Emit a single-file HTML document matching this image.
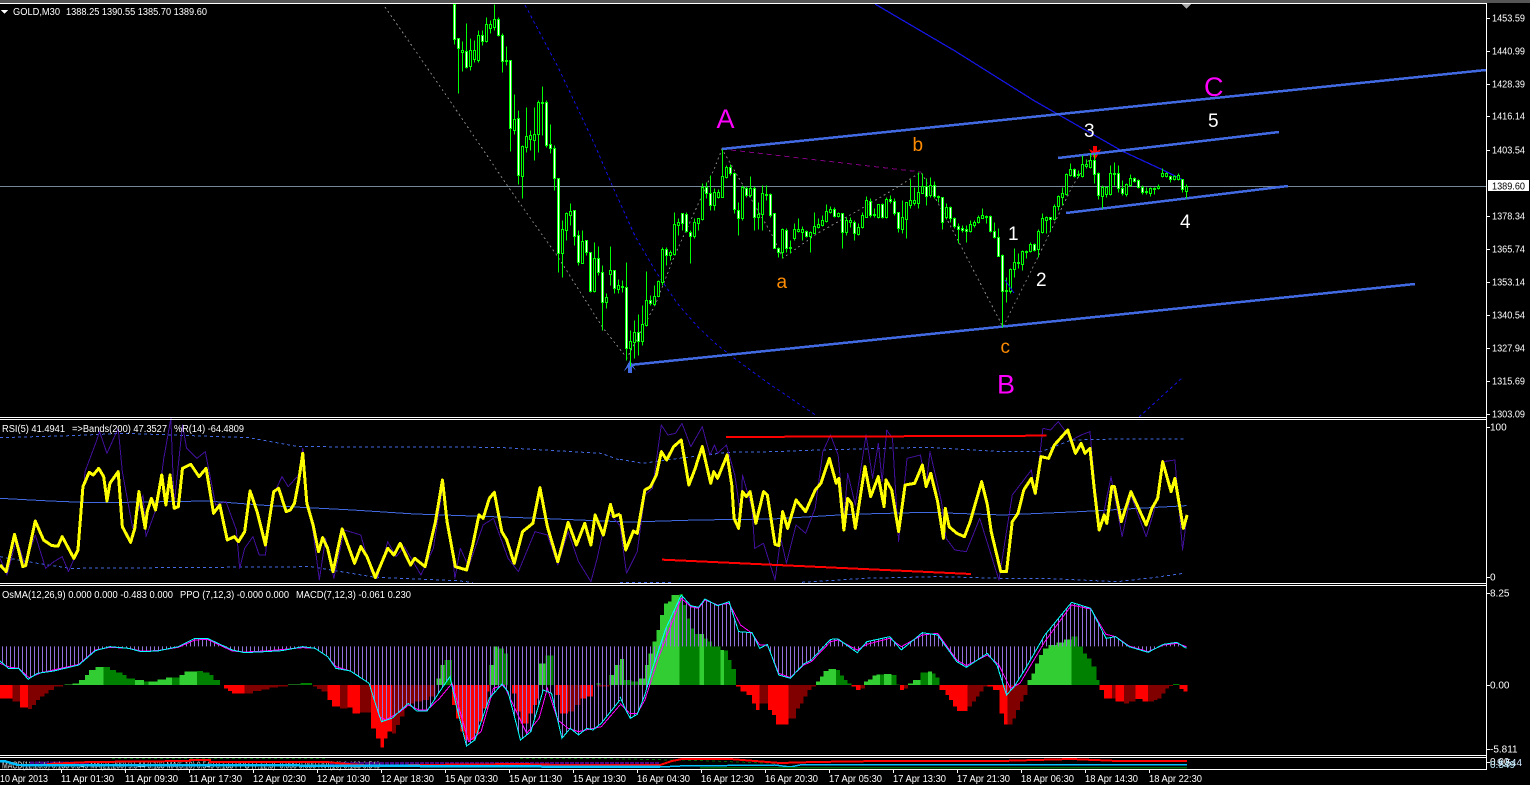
<!DOCTYPE html>
<html lang="en">
<head>
<meta charset="utf-8">
<title>GOLD,M30</title>
<style>
html,body{margin:0;padding:0;background:#000;overflow:hidden;width:1530px;height:785px}
svg{display:block}
text{font-family:"Liberation Sans",sans-serif;font-size:10px;fill:#fff}
.z{fill:none;vector-effect:non-scaling-stroke}
.big{font-size:27px}
.mid{font-size:19px}
.o{fill:#ff8c00}
.m{fill:#ff00ff}
</style>
</head>
<body>
<svg xmlns="http://www.w3.org/2000/svg" width="1530" height="785" viewBox="0 0 1530 785" shape-rendering="crispEdges">
<defs>
<pattern id="st" width="4" height="4" patternUnits="userSpaceOnUse"><rect x="2" y="0" width="1" height="4" fill="#9370db"/></pattern>
<clipPath id="cp">
<polygon transform="translate(0,585) scale(.4147,.3333)" points="0,184 0,228 20,250 45,250 68,283 90,265 130,258 190,240 230,197 265,185 310,190 340,200 380,198 430,185 470,160 500,160 560,195 590,203 640,200 680,197 730,185 760,190 790,215 810,250 845,258 890,295 905,355 920,410 945,400 985,355 1005,378 1030,378 1060,320 1085,275 1100,360 1125,483 1145,465 1180,340 1210,298 1225,320 1255,465 1280,440 1310,315 1330,325 1355,460 1375,430 1395,450 1415,430 1430,435 1450,415 1495,345 1495,184"/>
<polygon transform="translate(620,585) scale(.3827,.3333)" points="0,184 0,335 15,375 27,400 45,388 65,330 85,250 120,130 160,30 185,62 205,67 222,42 255,62 285,50 310,140 345,143 365,190 385,178 415,270 445,280 480,237 500,225 550,163 570,162 620,203 645,170 705,155 735,195 790,143 830,150 880,230 905,247 960,205 985,240 1010,330 1030,305 1060,250 1110,150 1180,52 1230,70 1270,160 1295,155 1330,185 1380,202 1420,178 1455,172 1480,190 1480,184"/>
</clipPath>
</defs>

<rect width="1530" height="785" fill="#000"/>
<rect width="1530" height="3" fill="#555"/>

<!-- Main chart drawing objects (behind candles) -->
<line x1="0" y1="186.5" x2="1486" y2="186.5" stroke="#778899"/>
<polyline fill="none" stroke="#808080" stroke-dasharray="2 3" points="385,7 446,95 509,188 558,257 603,328 627,358 656,303 674,257 700,200 715,167 722,149 740,180 771,233 783,258 818,233 859,210 896,188 921,172 950,225 1003,327 1038,257 1072,187 1092,155"/>
<polyline fill="none" stroke="#1010e0" stroke-dasharray="3 3" points="525,5 558,67 594,143 612,185 635,236 656,272 677,303 698,327 716,344 734,358 768,383 817,416"/>
<polyline fill="none" stroke="#1010e0" stroke-dasharray="3 3" points="1139,417 1160,398 1183,377"/>
<polyline fill="none" stroke="#1515e0" stroke-width="1.3" points="875,4 955,51 1033,100 1122,151 1163,170 1183,180"/>
<polyline fill="none" stroke="#800080" stroke-dasharray="5 4" points="722,149 921,172"/>
<polygon points="630,360 636,371 632,367 632,373 628,373 628,367 624,371" fill="#4169e1"/>
<polygon points="1093,146 1097,146 1097,151 1101,149 1095,160 1089,149 1093,151" fill="#f00"/>

<!-- Trend lines -->
<g stroke="#4169e1" stroke-width="2.5" fill="none">
<line x1="630" y1="365" x2="1415" y2="284"/>
<line x1="722" y1="149" x2="1486" y2="70"/>
<line x1="1058" y1="158" x2="1279" y2="132"/>
<line x1="1066" y1="213" x2="1288" y2="186"/>
</g>

<!-- Candles -->
<g transform="translate(.5,.5)">
<path fill="none" stroke="#00ff00" d="M454 4V44M458 38V93M462 41V71M466 23V68M470 38V70M474 40V62M478 30V62M482 30V45M486 17V42M490 20V33M494 4V30M498 17V36M502 33V72M506 46V65M510 60V151M514 94V134M518 110V184M522 145V198M526 107V152M530 130V150M534 107V160M538 100V152M542 86V135M546 100V147M550 124V153M554 145V190M558 178V272M562 220V277M566 212V240M570 203V225M574 210V245M578 230V265M582 230V263M586 240V255M590 252V292M594 242V292M598 246V275M602 265V330M606 293V308M610 246V285M614 270V293M618 279V293M622 280V292M626 262V360M630 330V366M634 320V358M638 314V355M642 305V345M646 271V326M650 295V305M654 285V305M658 280V296M662 247V285M666 247V265M670 250V260M674 212V255M678 218V235M682 213V230M686 212V232M690 230V263M694 218V238M698 218V230M702 183V220M706 182V198M710 175V210M714 188V210M718 189V198M722 149V197M726 165V178M730 164V175M734 172V213M738 202V235M742 185V220M746 186V197M750 176V197M754 186V230M758 202V229M762 185V230M766 185V200M770 193V217M774 213V248M778 247V257M782 228V258M786 228V252M790 240V253M794 223V240M798 218V232M802 226V240M806 230V237M810 231V252M814 212V233M818 218V228M822 215V226M826 204V222M830 206V213M834 207V217M838 212V217M842 213V248M846 217V235M850 217V227M854 220V240M858 223V235M862 212V228M866 196V217M870 198V217M874 208V217M878 204V218M882 203V218M886 197V218M890 195V203M894 198V215M898 212V232M902 200V233M906 202V238M910 179V208M914 187V205M918 172V208M922 173V193M926 178V205M930 177V197M934 181V198M938 195V202M942 197V229M946 203V219M950 206V222M954 217V228M958 223V243M962 225V232M966 225V242M970 220V232M974 220V227M978 215V223M982 208V218M986 215V223M990 215V232M994 222V238M998 228V256M1002 254V327M1006 277V302M1010 268V293M1014 248V277M1018 253V268M1022 250V270M1026 250V258M1030 242V252M1034 243V251M1038 229V257M1042 213V233M1046 216V233M1050 217V231M1054 204V220M1058 195V210M1062 187V205M1066 173V195M1070 163V176M1074 168V177M1078 170V177M1082 155V177M1086 159V168M1090 153V168M1094 153V183M1098 172V199M1102 185V208M1106 186V197M1110 165V195M1114 162V185M1118 165V192M1122 180V195M1126 183V196M1130 174V186M1134 177V182M1138 179V188M1142 185V194M1146 187V194M1150 187V196M1154 187V194M1158 184V189M1162 168V177M1166 172V177M1170 175V182M1174 175V180M1178 173V180M1182 179V192M1186 184V198"/>
<path fill="#fff" stroke="#00ff00" d="M453 4h2V39h-2zM457 38h2V48h-2zM465 51h2V67h-2zM481 35h2V41h-2zM497 19h2V35h-2zM501 35h2V61h-2zM509 60h2V128h-2zM517 118h2V175h-2zM545 102h2V145h-2zM549 144h2V148h-2zM553 148h2V178h-2zM557 178h2V253h-2zM573 210h2V236h-2zM577 235h2V262h-2zM585 240h2V252h-2zM589 252h2V291h-2zM597 258h2V272h-2zM601 272h2V302h-2zM613 270h2V288h-2zM621 286h2V287h-2zM625 287h2V348h-2zM637 332h2V341h-2zM649 300h2V303h-2zM665 249h2V255h-2zM681 213h2V223h-2zM685 214h2V231h-2zM689 232h2V236h-2zM705 187h2V193h-2zM709 193h2V205h-2zM729 167h2V173h-2zM733 173h2V209h-2zM737 210h2V218h-2zM745 188h2V195h-2zM753 188h2V217h-2zM769 194h2V215h-2zM773 213h2V248h-2zM777 248h2V252h-2zM785 230h2V248h-2zM805 231h2V236h-2zM833 209h2V216h-2zM841 213h2V232h-2zM853 222h2V233h-2zM869 201h2V215h-2zM881 204h2V217h-2zM889 199h2V201h-2zM893 201h2V213h-2zM897 212h2V228h-2zM925 186h2V196h-2zM933 185h2V196h-2zM937 196h2V197h-2zM941 197h2V222h-2zM949 207h2V218h-2zM953 218h2V226h-2zM957 226h2V229h-2zM961 228h2V230h-2zM965 229h2V231h-2zM989 216h2V231h-2zM993 231h2V237h-2zM997 237h2V256h-2zM1001 255h2V291h-2zM1005 290h2V291h-2zM1033 244h2V250h-2zM1049 217h2V219h-2zM1073 169h2V176h-2zM1093 160h2V174h-2zM1097 173h2V195h-2zM1117 173h2V188h-2zM1121 188h2V193h-2zM1133 178h2V181h-2zM1137 180h2V187h-2zM1141 187h2V192h-2zM1169 176h2V179h-2zM1181 179h2V189h-2z"/>
<path fill="#000" stroke="#00ff00" d="M461 50h2V52h-2zM469 50h2V66h-2zM473 50h2V59h-2zM477 35h2V60h-2zM485 24h2V41h-2zM489 24h2V28h-2zM493 19h2V27h-2zM505 60h2V61h-2zM513 119h2V130h-2zM521 146h2V176h-2zM525 136h2V147h-2zM529 135h2V139h-2zM533 134h2V140h-2zM537 102h2V134h-2zM541 102h2V103h-2zM561 229h2V253h-2zM565 213h2V230h-2zM569 211h2V215h-2zM581 241h2V263h-2zM593 258h2V291h-2zM605 297h2V302h-2zM609 270h2V274h-2zM617 285h2V289h-2zM629 341h2V348h-2zM633 332h2V342h-2zM641 324h2V341h-2zM645 300h2V325h-2zM653 296h2V304h-2zM657 281h2V296h-2zM661 249h2V282h-2zM669 252h2V255h-2zM673 224h2V254h-2zM677 222h2V225h-2zM693 222h2V236h-2zM697 218h2V223h-2zM701 187h2V219h-2zM713 192h2V205h-2zM717 192h2V197h-2zM721 176h2V197h-2zM725 167h2V177h-2zM741 187h2V218h-2zM749 188h2V195h-2zM757 214h2V217h-2zM761 193h2V214h-2zM765 194h2V195h-2zM781 229h2V252h-2zM789 247h2V248h-2zM793 229h2V238h-2zM797 229h2V231h-2zM801 229h2V232h-2zM809 232h2V236h-2zM813 226h2V233h-2zM817 224h2V227h-2zM821 220h2V225h-2zM825 211h2V221h-2zM829 209h2V212h-2zM837 213h2V216h-2zM845 220h2V232h-2zM849 220h2V222h-2zM857 227h2V234h-2zM861 215h2V227h-2zM865 200h2V217h-2zM873 214h2V215h-2zM877 204h2V217h-2zM885 199h2V217h-2zM901 217h2V229h-2zM905 202h2V219h-2zM909 200h2V205h-2zM913 200h2V203h-2zM917 192h2V203h-2zM921 186h2V193h-2zM929 185h2V195h-2zM945 207h2V217h-2zM969 224h2V231h-2zM973 222h2V225h-2zM977 217h2V222h-2zM981 215h2V218h-2zM985 216h2V217h-2zM1009 269h2V291h-2zM1013 262h2V269h-2zM1017 262h2V263h-2zM1021 251h2V264h-2zM1025 251h2V252h-2zM1029 244h2V251h-2zM1037 231h2V249h-2zM1041 218h2V232h-2zM1045 217h2V220h-2zM1053 206h2V219h-2zM1057 196h2V206h-2zM1061 193h2V197h-2zM1065 174h2V194h-2zM1069 169h2V175h-2zM1077 174h2V175h-2zM1081 164h2V176h-2zM1085 164h2V166h-2zM1089 160h2V167h-2zM1101 187h2V196h-2zM1105 187h2V194h-2zM1109 173h2V194h-2zM1113 173h2V174h-2zM1125 184h2V194h-2zM1129 178h2V185h-2zM1145 191h2V192h-2zM1149 188h2V193h-2zM1153 188h2V189h-2zM1157 186h2V188h-2zM1161 173h2V176h-2zM1165 173h2V176h-2zM1173 176h2V179h-2zM1177 175h2V179h-2zM1185 186h2V191h-2z"/>
</g>

<line x1="1005" y1="280" x2="1014" y2="293" stroke="#1010e0"/>
<polygon points="1181,3 1192,3 1186.5,9" fill="#aaa"/>

<!-- Wave labels -->
<g shape-rendering="auto">
<text class="big m" x="716.5" y="128">A</text>
<text class="big m" x="997" y="393.5">B</text>
<text class="big m" x="1204" y="96">C</text>
<text class="mid o" x="776.5" y="288">a</text>
<text class="mid o" x="912.5" y="151">b</text>
<text class="mid o" x="1000.5" y="353">c</text>
<text class="mid" x="1008" y="240">1</text>
<text class="mid" x="1036" y="286">2</text>
<text class="mid" x="1084" y="137">3</text>
<text class="mid" x="1180" y="228">4</text>
<text class="mid" x="1208" y="127">5</text>
</g>

<!-- RSI panel -->
<g stroke-linejoin="round">
<g transform="translate(0,415) scale(.4147,.3333)">
<polyline class="z" stroke="#4169e1" stroke-dasharray="3 3" stroke-width="1" points="0,68 170,62 300,55 600,68 720,95 1200,97 1450,115 1494,135"/>
<polyline class="z" stroke="#4169e1" stroke-dasharray="3 3" stroke-width="1" points="0,425 90,445 170,460 750,455 905,487 1100,497 1140,502"/>
<polyline class="z" stroke="#4169e1" stroke-width="1" points="0,250 120,258 200,262 300,262 500,258 650,272 850,285 1000,297 1300,310 1494,320"/>
<polyline class="z" stroke="#40109a" stroke-width="1" points="0,430 17,480 40,370 60,450 85,360 110,460 130,440 150,425 165,470 190,400 205,170 232,80 240,50 258,115 285,40 295,170 320,340 345,240 352,365 380,270 395,130 412,10 420,270 440,30 450,100 475,130 495,110 520,270 545,260 570,345 578,460 590,400 610,365 625,420 640,420 655,250 680,185 695,215 720,180 730,100 740,250 755,350 770,495 785,370 805,490 830,345 870,360 895,470 910,490 935,380 955,425 975,395 1015,480 1045,400 1067,220 1085,350 1097,490 1110,400 1130,455 1165,330 1190,310 1225,430 1250,470 1290,350 1320,360 1345,450 1370,350 1395,440 1425,500 1440,430 1465,290 1494,330"/>
<polyline class="z" stroke="#ffff00" stroke-width="3" points="0,450 15,470 35,358 55,455 62,452 85,318 105,375 125,392 140,393 150,365 178,430 188,405 200,215 215,172 225,180 238,160 250,185 258,258 265,205 285,170 295,335 315,382 325,340 335,230 350,340 355,290 365,250 375,285 390,180 400,270 410,180 420,280 430,275 440,160 460,148 480,185 497,160 515,295 530,270 548,375 565,365 575,380 590,350 603,228 620,290 640,390 660,230 672,220 690,290 700,285 710,265 720,200 730,115 740,265 755,330 768,410 778,368 790,400 803,470 825,342 855,445 870,395 885,425 905,488 935,400 950,420 965,385 990,450 1000,430 1025,455 1050,320 1067,195 1078,320 1098,455 1125,465 1140,390 1155,300 1165,310 1180,250 1192,232 1210,350 1222,375 1240,445 1260,350 1285,325 1302,218 1320,335 1345,440 1370,322 1390,390 1410,325 1425,390 1435,300 1455,360 1472,268 1480,305 1495,297"/>
</g>
<g transform="translate(620,415) scale(.3827,.3333)">
<polyline class="z" stroke="#4169e1" stroke-dasharray="3 3" stroke-width="1" points="0,133 60,145 120,135 280,112 400,110 520,105 800,97 1000,110 1100,110 1180,75 1300,72 1472,72"/>
<polyline class="z" stroke="#4169e1" stroke-dasharray="3 3" stroke-width="1" points="0,503 140,503"/>
<polyline class="z" stroke="#4169e1" stroke-dasharray="3 3" stroke-width="1" points="475,502 640,490 830,485 1000,490 1100,490 1300,500 1400,487 1472,475"/>
<polyline class="z" stroke="#4169e1" stroke-width="1" points="0,322 200,315 400,312 600,298 800,292 1000,300 1200,290 1480,272"/>
<polyline class="z" stroke="#40109a" stroke-width="1" points="0,330 17,475 45,410 65,240 85,220 108,30 125,60 145,55 162,25 185,95 215,35 235,120 247,90 255,115 278,90 300,180 315,300 320,180 345,280 352,400 375,385 405,495 420,370 435,445 460,330 485,355 510,280 530,110 550,60 570,120 585,310 595,175 615,270 643,60 660,190 675,85 685,200 697,45 712,70 728,380 750,130 785,120 800,210 810,110 840,260 852,370 875,405 905,410 940,310 990,495 1025,240 1045,210 1075,165 1085,240 1105,40 1125,45 1145,20 1165,50 1180,75 1205,60 1228,50 1240,200 1255,345 1283,185 1300,290 1312,365 1335,240 1375,365 1395,290 1420,140 1450,135 1470,405 1482,300"/>
<polyline class="z" stroke="#ffff00" stroke-width="3" points="0,297 15,405 35,348 45,355 65,225 80,215 95,180 108,110 122,135 140,95 160,75 180,210 195,165 215,95 237,205 245,170 255,190 280,120 292,210 298,310 310,340 320,230 330,245 340,230 355,325 375,230 385,240 405,388 415,392 425,290 438,340 460,255 485,290 510,225 525,205 547,130 565,205 572,190 585,345 595,250 605,265 615,340 640,155 655,245 675,185 690,275 695,195 710,225 728,350 745,210 770,205 790,150 800,215 812,175 830,260 845,370 850,280 860,335 880,355 900,365 915,320 945,200 960,270 970,350 995,470 1010,470 1025,320 1040,295 1055,225 1075,190 1085,235 1100,125 1120,130 1135,90 1170,45 1190,115 1205,85 1215,115 1228,100 1240,230 1252,345 1265,300 1272,325 1285,215 1292,215 1310,320 1335,230 1375,330 1390,280 1405,250 1418,140 1440,230 1450,190 1472,340 1482,300"/>
<polyline class="z" stroke="#ff0000" stroke-width="2" points="277,66 1115,62"/>
<polyline class="z" stroke="#ff0000" stroke-width="2" points="110,434 917,477"/>
</g>
</g>

<!-- MACD panel histogram -->
<g transform="translate(0,585) scale(.4147,.3333)">
<path fill="#ff0000" d="M0 300V340H30V300zM48 300V368H67V300zM540 300V310H550V318H560V326H590V300zM790 300V345H800V365H820V300zM838 300V368H850V385H868V300zM895 300V430H907V460H917V488H926V460H935V440H945V300zM1090 300V360H1100V400H1110V440H1120V465H1145V445H1155V410H1165V370H1175V320H1180V300zM1235 300V325H1245V380H1255V415H1275V385H1285V360H1295V340H1300V300zM1340 300V330H1350V385H1370V300zM1400 300V340H1415V335H1430V300z"/>
<path fill="#800000" d="M30 300V350H48V300zM67 300V372H77V360H87V345H97V335H107V325H117V315H130V305H152V300zM590 300V325H610V318H630V314H650V308H670V304H695V300zM755 300V305H765V312H775V320H790V300zM820 300V370H838V300zM868 300V382H895V300zM945 300V445H955V420H965V395H975V370H980V355H1000V350H1020V345H1035V335H1050V300zM1370 300V380H1385V360H1400V300zM1440 300V305H1470V300z"/>
<path fill="#32cd32" d="M155 300V298H175V295H190V285H205V270H215V255H230V246H250V300zM325 300V285H347V300zM358 300V290H380V283H400V277H415V300zM433 300V270H445V260H475V300zM695 300V298H725V300zM1052 300V280H1062V240H1072V300zM1180 300V240H1190V185H1200V300zM1300 300V235H1315V300zM1470 300V270H1480V240H1494V300z"/>
<path fill="#008000" d="M250 300V246H265V255H280V262H295V270H305V280H325V300zM347 300V290H358V300zM415 300V277H433V300zM475 300V258H490V262H505V270H515V285H530V300zM725 300V294H752V300zM1072 300V225H1090V300zM1200 300V190H1215V205H1225V300zM1315 300V212H1335V300zM1438 300V294H1448V300z"/>
</g>
<g transform="translate(620,585) scale(.3827,.3333)">
<path fill="#32cd32" d="M0 300V222H10V300zM50 300V280H65V240H75V205H85V170H95V135H105V90H115V55H125V50H135V30H155V300zM208 300V147H220V300zM262 300V195H272V300zM512 300V290H522V275H532V258H545V252H565V300zM638 300V290H648V283H660V272H670V268H680V300zM690 300V267H710V300zM753 300V295H765V285H785V300zM805 300V260H815V300zM1065 300V285H1075V265H1085V235H1095V210H1105V190H1120V180H1140V172H1160V163H1180V300z"/>
<path fill="#008000" d="M10 300V285H30V290H50V300zM155 300V27H165V60H175V100H185V130H195V147H208V300zM220 300V160H230V170H240V185H262V300zM272 300V197H282V225H292V252H303V300zM565 300V255H575V272H585V285H595V295H605V300zM680 300V268H690V300zM710 300V270H722V300zM722 300V298H730V300zM785 300V263H805V300zM815 300V265H825V278H835V300zM1180 300V155H1195V185H1210V205H1220V220H1232V245H1245V285H1253V300zM1445 300V297H1462V300z"/>
<path fill="#ff0000" d="M303 300V305H315V320H330V330H345V355H355V375H365V300zM387 300V375H397V390H407V418H440V300zM605 300V305H617V315H628V300zM732 300V315H742V300zM835 300V315H850V330H860V345H870V365H880V378H908V300zM960 300V305H975V315H992V385H1003V418H1013V300zM1253 300V315H1265V340H1285V300zM1295 300V350H1317V300zM1347 300V342H1365V350H1380V300zM1462 300V312H1473V320H1483V300z"/>
<path fill="#800000" d="M365 300V355H387V300zM440 300V400H460V370H470V355H480V335H490V315H500V305H512V300zM628 300V310H640V300zM742 300V310H753V300zM908 300V365H920V350H930V335H940V320H950V305H960V300zM1013 300V418H1025V400H1035V375H1045V350H1055V330H1065V300zM1285 300V340H1295V300zM1317 300V355H1330V350H1347V300zM1380 300V350H1395V345H1405V340H1415V325H1425V310H1435V303H1445V300z"/>
</g>
<!-- MACD bars -->
<rect x="0" y="590" width="1190" height="165" fill="url(#st)" clip-path="url(#cp)"/>
<!-- MACD lines -->
<g transform="translate(0,585) scale(.4147,.3333)">
<polyline class="z" stroke="#ff00ff" points="0,235 25,247 45,250 70,278 100,263 190,238 230,195 265,187 310,190 340,198 380,197 430,187 470,165 500,163 560,198 590,201 640,198 730,188 760,190 790,215 810,245 845,258 890,295 915,395 930,405 965,380 985,360 1010,375 1030,375 1060,340 1090,295 1130,470 1160,440 1190,310 1215,300 1270,445 1300,400 1320,310 1345,405 1370,430 1395,440 1450,425 1495,360"/>
<polyline class="z" stroke="#00ffff" points="0,228 20,250 45,250 68,283 90,265 130,258 190,240 230,197 265,185 310,190 340,200 380,198 430,185 470,160 500,160 560,195 590,203 640,200 680,197 730,185 760,190 790,215 810,250 845,258 890,295 905,355 920,410 945,400 985,355 1005,378 1030,378 1060,320 1085,275 1100,360 1125,483 1145,465 1180,340 1210,298 1225,320 1255,465 1280,440 1310,315 1330,325 1355,460 1375,430 1395,450 1415,430 1430,435 1450,415 1495,345"/>
</g>
<g transform="translate(620,585) scale(.3827,.3333)">
<polyline class="z" stroke="#ff00ff" points="0,355 25,385 45,385 65,345 100,220 160,40 185,65 205,70 222,45 255,60 285,55 315,120 345,145 365,180 385,180 415,265 445,278 480,240 500,230 550,170 570,165 620,195 645,178 705,160 735,185 790,150 830,145 880,225 905,242 960,210 990,240 1020,310 1045,295 1110,170 1180,60 1230,72 1270,148 1295,155 1330,183 1380,200 1420,180 1455,175 1480,185"/>
<polyline class="z" stroke="#00ffff" points="0,335 15,375 27,400 45,388 65,330 85,250 120,130 160,30 185,62 205,67 222,42 255,62 285,50 310,140 345,143 365,190 385,178 415,270 445,280 480,237 500,225 550,163 570,162 620,203 645,170 705,155 735,195 790,143 830,150 880,230 905,247 960,205 985,240 1010,330 1030,305 1060,250 1110,150 1180,52 1230,70 1270,160 1295,155 1330,185 1380,202 1420,178 1455,172 1480,190"/>
</g>

<!-- Mini panel -->
<text x="2" y="768.5" textLength="378" lengthAdjust="spacingAndGlyphs" style="fill:#ddd" shape-rendering="auto">MACD(12,26,9) 0.133 0.549 MA(21,200) 9.544 0.133 MA(5,10) 0.549 0.133 PPO (7,12,3) -0.000 0.000 RVI(10) 0.133 0.549</text>
<g fill="none">
<polyline stroke="#006400" stroke-dasharray="3 3" points="112,758.5 325,758.5"/>
<polyline stroke="#006400" stroke-dasharray="3 3" points="520,758.5 600,758.5 700,760.5 775,763.5"/>
<polyline stroke="#4b0082" stroke-width="3" stroke-dasharray="4 1" points="30,763 90,763"/>
<polyline stroke="#4b0082" stroke-width="3" stroke-dasharray="4 1" points="330,763.5 660,763.5"/>
<polyline stroke="#ff0000" stroke-width="2" points="47,764 90,762 190,761 190,760 210,760 210,762 327,762 347,764 375,766 420,765 520,764 560,765 620,765 660,765 672,761 682,759 730,759 755,761 780,763 815,762 880,761 1000,761 1071,759 1118,761 1187,761"/>
<polyline stroke="#00bfff" stroke-width="2.5" points="0,761 4,761 18,765 300,765.5 420,766 660,767"/>
<polyline stroke="#00bfff" stroke-width="1.5" points="660,767 680,766 775,765 790,767 800,765 1187,764.5"/>
<polyline stroke="#006400" stroke-width="1.5" points="700,767.5 1187,767.5"/>
</g>

<!-- Frame lines -->
<g fill="#fff">
<rect x="0" y="3" width="1487" height="1"/>
<rect x="0" y="417" width="1487" height="1"/>
<rect x="0" y="419" width="1487" height="1"/>
<rect x="0" y="583" width="1487" height="1"/>
<rect x="0" y="585" width="1487" height="1"/>
<rect x="0" y="755" width="1487" height="1"/>
<rect x="0" y="757" width="1487" height="1"/>
<rect x="0" y="769" width="1487" height="1"/>
<rect x="1486" y="3" width="1" height="767"/>
</g>

<!-- Right axis ticks -->
<path stroke="#fff" fill="none" d="M1487 18.5h3M1487 51.5h3M1487 84.5h3M1487 116.5h3M1487 150.5h3M1487 216.5h3M1487 249.5h3M1487 282.5h3M1487 315.5h3M1487 348.5h3M1487 381.5h3M1487 414.5h3M1487 427.5h3M1487 577.5h3M1487 593.5h3M1487 685.5h3M1487 749.5h3M1487 762.5h3"/>
<!-- Bottom axis ticks -->
<path stroke="#fff" fill="none" d="M61.5 770v3M125.5 770v3M189.5 770v3M253.5 770v3M317.5 770v3M381.5 770v3M445.5 770v3M509.5 770v3M573.5 770v3M637.5 770v3M701.5 770v3M765.5 770v3M829.5 770v3M893.5 770v3M957.5 770v3M1021.5 770v3M1085.5 770v3M1149.5 770v3"/>

<!-- Text -->
<polygon points="1,10 8,10 4.5,14" fill="#fff"/>
<g shape-rendering="auto">
<text x="13" y="15" textLength="47" lengthAdjust="spacingAndGlyphs">GOLD,M30</text>
<text x="66" y="15" textLength="141" lengthAdjust="spacingAndGlyphs">1388.25 1390.55 1385.70 1389.60</text>
<text x="2" y="432" textLength="63" lengthAdjust="spacingAndGlyphs">RSI(5) 41.4941</text>
<text x="72" y="432" textLength="95" lengthAdjust="spacingAndGlyphs">=&gt;Bands(200) 47.3527</text>
<text x="174" y="432" textLength="70" lengthAdjust="spacingAndGlyphs">%R(14) -64.4809</text>
<text x="2" y="598" textLength="171" lengthAdjust="spacingAndGlyphs">OsMA(12,26,9) 0.000 0.000 -0.483 0.000</text>
<text x="180" y="598" textLength="109" lengthAdjust="spacingAndGlyphs">PPO (7,12,3) -0.000 0.000</text>
<text x="296" y="598" textLength="115" lengthAdjust="spacingAndGlyphs">MACD(7,12,3) -0.061 0.230</text>

<g>
<text x="1492" y="21.5" textLength="33" lengthAdjust="spacingAndGlyphs">1453.59</text>
<text x="1492" y="54.5" textLength="33" lengthAdjust="spacingAndGlyphs">1440.99</text>
<text x="1492" y="87.5" textLength="33" lengthAdjust="spacingAndGlyphs">1428.39</text>
<text x="1492" y="119.5" textLength="33" lengthAdjust="spacingAndGlyphs">1416.14</text>
<text x="1492" y="153.5" textLength="33" lengthAdjust="spacingAndGlyphs">1403.54</text>
<text x="1492" y="219.5" textLength="33" lengthAdjust="spacingAndGlyphs">1378.34</text>
<text x="1492" y="252.5" textLength="33" lengthAdjust="spacingAndGlyphs">1365.74</text>
<text x="1492" y="285.5" textLength="33" lengthAdjust="spacingAndGlyphs">1353.14</text>
<text x="1492" y="318.5" textLength="33" lengthAdjust="spacingAndGlyphs">1340.54</text>
<text x="1492" y="351.5" textLength="33" lengthAdjust="spacingAndGlyphs">1327.94</text>
<text x="1492" y="384.5" textLength="33" lengthAdjust="spacingAndGlyphs">1315.69</text>
<text x="1492" y="417.5" textLength="33" lengthAdjust="spacingAndGlyphs">1303.09</text>
</g>
<rect x="1488" y="180" width="41" height="11" fill="#fff" shape-rendering="crispEdges"/>
<text x="1492" y="189.5" textLength="33" lengthAdjust="spacingAndGlyphs" style="fill:#000">1389.60</text>
<text x="1490" y="430.5">100</text>
<text x="1490" y="580.5">0</text>
<text x="1490" y="596.5">8.25</text>
<text x="1490" y="688.5">0.00</text>
<text x="1490" y="752.5">-5.811</text>
<text x="1490" y="765">0.00</text>
<text x="1497" y="766" style="fill:#cfe8ff">9.544</text>
<text x="1490" y="768" style="fill:#bfefff">0.549</text>

<g>
<text x="0" y="782" textLength="48" lengthAdjust="spacingAndGlyphs">10 Apr 2013</text>
<text x="61" y="782" textLength="53" lengthAdjust="spacingAndGlyphs">11 Apr 01:30</text>
<text x="125" y="782" textLength="53" lengthAdjust="spacingAndGlyphs">11 Apr 09:30</text>
<text x="189" y="782" textLength="53" lengthAdjust="spacingAndGlyphs">11 Apr 17:30</text>
<text x="253" y="782" textLength="53" lengthAdjust="spacingAndGlyphs">12 Apr 02:30</text>
<text x="317" y="782" textLength="53" lengthAdjust="spacingAndGlyphs">12 Apr 10:30</text>
<text x="381" y="782" textLength="53" lengthAdjust="spacingAndGlyphs">12 Apr 18:30</text>
<text x="445" y="782" textLength="53" lengthAdjust="spacingAndGlyphs">15 Apr 03:30</text>
<text x="509" y="782" textLength="53" lengthAdjust="spacingAndGlyphs">15 Apr 11:30</text>
<text x="573" y="782" textLength="53" lengthAdjust="spacingAndGlyphs">15 Apr 19:30</text>
<text x="637" y="782" textLength="53" lengthAdjust="spacingAndGlyphs">16 Apr 04:30</text>
<text x="701" y="782" textLength="53" lengthAdjust="spacingAndGlyphs">16 Apr 12:30</text>
<text x="765" y="782" textLength="53" lengthAdjust="spacingAndGlyphs">16 Apr 20:30</text>
<text x="829" y="782" textLength="53" lengthAdjust="spacingAndGlyphs">17 Apr 05:30</text>
<text x="893" y="782" textLength="53" lengthAdjust="spacingAndGlyphs">17 Apr 13:30</text>
<text x="957" y="782" textLength="53" lengthAdjust="spacingAndGlyphs">17 Apr 21:30</text>
<text x="1021" y="782" textLength="53" lengthAdjust="spacingAndGlyphs">18 Apr 06:30</text>
<text x="1085" y="782" textLength="53" lengthAdjust="spacingAndGlyphs">18 Apr 14:30</text>
<text x="1149" y="782" textLength="53" lengthAdjust="spacingAndGlyphs">18 Apr 22:30</text>
</g>
</g>
</svg>
</body>
</html>
